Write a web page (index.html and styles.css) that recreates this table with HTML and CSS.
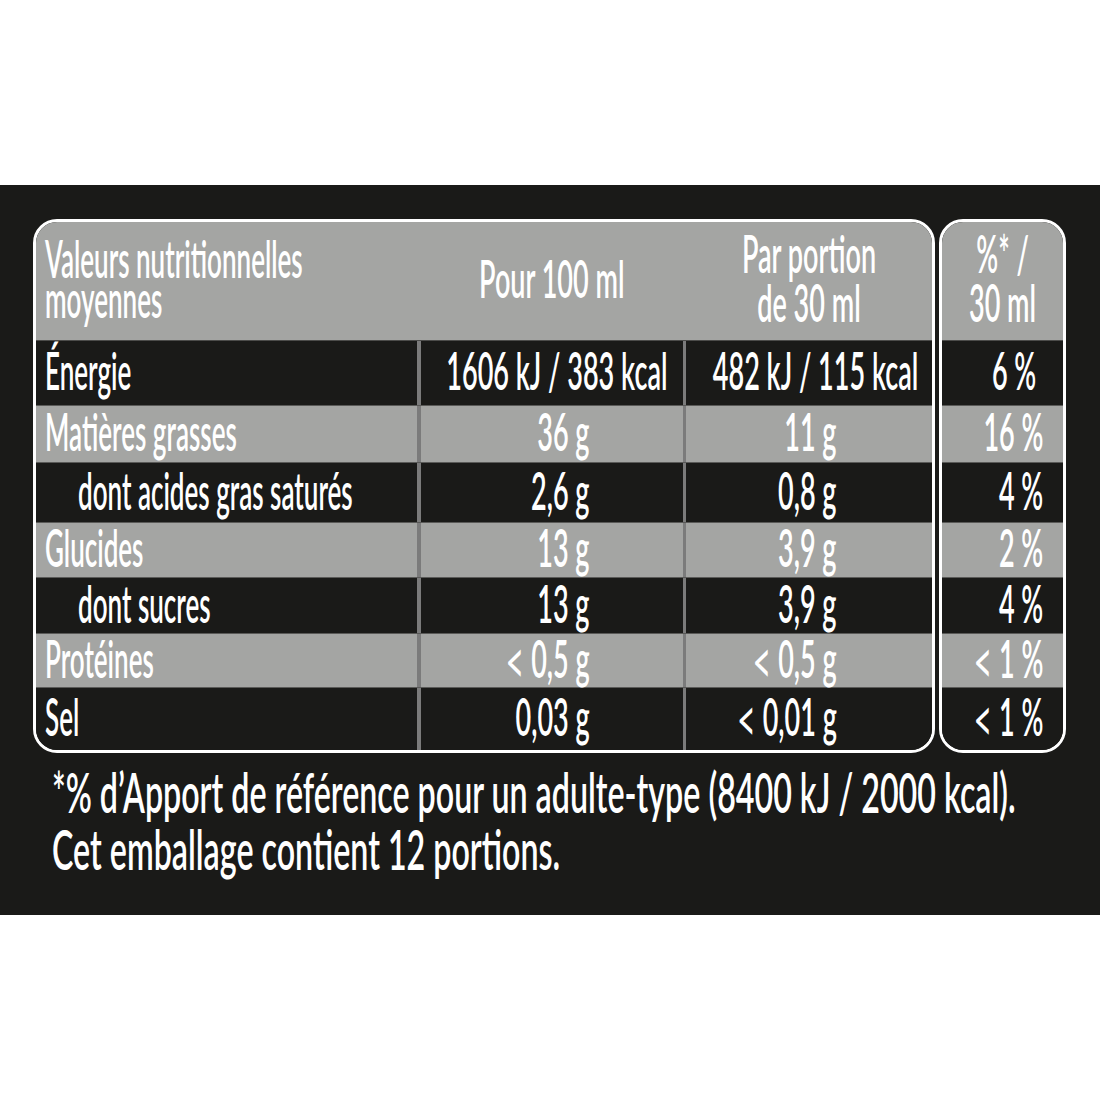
FILE: index.html
```html
<!DOCTYPE html>
<html lang="fr">
<head>
<meta charset="utf-8">
<title>Valeurs nutritionnelles</title>
<link rel="stylesheet" href="styles.css">
</head>
<body>
<div class="band">
  <div class="tables">
    <div class="box main">
      <div class="row head">
        <div class="c c1 hl"><span class="t lbl">Valeurs nutritionnelles<br>moyennes</span></div>
        <div class="c c2 hc"><span class="t">Pour 100 ml</span></div>
        <div class="c c3 hc"><span class="t tall">Par portion<br>de 30 ml</span></div>
      </div>
      <div class="row dark r-en">
        <div class="c c1"><span class="t lbl">Énergie</span></div>
        <div class="c c2 num wide"><span class="t">1606 kJ / 383 kcal</span></div>
        <div class="c c3 num wide"><span class="t">482 kJ / 115 kcal</span></div>
      </div>
      <div class="row light r-mg">
        <div class="c c1"><span class="t lbl">Matières grasses</span></div>
        <div class="c c2 num"><span class="t">36 g</span></div>
        <div class="c c3 num"><span class="t">11 g</span></div>
      </div>
      <div class="row dark r-ag">
        <div class="c c1 sub"><span class="t lbl">dont acides gras saturés</span></div>
        <div class="c c2 num"><span class="t">2,6 g</span></div>
        <div class="c c3 num"><span class="t">0,8 g</span></div>
      </div>
      <div class="row light r-gl">
        <div class="c c1"><span class="t lbl">Glucides</span></div>
        <div class="c c2 num"><span class="t">13 g</span></div>
        <div class="c c3 num"><span class="t">3,9 g</span></div>
      </div>
      <div class="row dark r-su">
        <div class="c c1 sub"><span class="t lbl">dont sucres</span></div>
        <div class="c c2 num"><span class="t">13 g</span></div>
        <div class="c c3 num"><span class="t">3,9 g</span></div>
      </div>
      <div class="row light r-pr">
        <div class="c c1"><span class="t lbl">Protéines</span></div>
        <div class="c c2 num"><span class="t"><span class="lt">&lt;</span> 0,5 g</span></div>
        <div class="c c3 num"><span class="t"><span class="lt">&lt;</span> 0,5 g</span></div>
      </div>
      <div class="row dark r-se">
        <div class="c c1"><span class="t lbl">Sel</span></div>
        <div class="c c2 num"><span class="t">0,03 g</span></div>
        <div class="c c3 num"><span class="t"><span class="lt">&lt;</span> 0,01 g</span></div>
      </div>
    </div>
    <div class="box side">
      <div class="row head">
        <div class="c cs hc"><span class="t tall">%* /<br>30 ml</span></div>
      </div>
      <div class="row dark r-en"><div class="c cs num wide"><span class="t">6 %</span></div></div>
      <div class="row light r-mg"><div class="c cs num"><span class="t">16 %</span></div></div>
      <div class="row dark r-ag"><div class="c cs num"><span class="t">4 %</span></div></div>
      <div class="row light r-gl"><div class="c cs num"><span class="t">2 %</span></div></div>
      <div class="row dark r-su"><div class="c cs num"><span class="t">4 %</span></div></div>
      <div class="row light r-pr"><div class="c cs num"><span class="t"><span class="lt">&lt;</span> 1 %</span></div></div>
      <div class="row dark r-se"><div class="c cs num"><span class="t"><span class="lt">&lt;</span> 1 %</span></div></div>
    </div>
  </div>
  <p class="note"><span class="t">*% d’Apport de référence pour un adulte-type (8400 kJ / 2000 kcal).<br>Cet emballage contient 12 portions.</span></p>
</div>
</body>
</html>
```

FILE: styles.css
```css
html, body {
  margin: 0;
  padding: 0;
  background: #ffffff;
  overflow: hidden;
}

body {
  font-family: Lato, Roboto, "Liberation Sans", sans-serif;
  color: #ffffff;
}

.band {
  margin-top: 185px;
  height: 730px;
  box-sizing: border-box;
  padding: 34px 0 0 33px;
  background: #1a1a18;
  overflow: hidden;
}

.tables {
  display: flex;
  gap: 4px;
  align-items: flex-start;
}

.box {
  border: 3px solid #ffffff;
  border-radius: 24px;
  overflow: hidden;
}

.main { width: 896px; }
.side { width: 121px; }

.row {
  display: flex;
  box-sizing: border-box;
}

.head { height: 118px; background: #a4a5a3; }
.dark { background: #1a1a18; }
.light { background: #a4a5a3; }

.r-en { height: 65px; border-top: 1px solid #4c4c4a; }
.r-mg { height: 57px; border-top: 1px solid #5a5a58; }
.r-ag { height: 60px; border-top: 1px solid #5a5a58; }
.r-gl { height: 55px; border-top: 1px solid #5a5a58; }
.r-su { height: 56px; border-top: 1px solid #5a5a58; }
.r-pr { height: 54px; border-top: 1px solid #5a5a58; }
.r-se { height: 63px; border-top: 1px solid #5a5a58; }

.c {
  display: flex;
  align-items: center;
  box-sizing: border-box;
  white-space: nowrap;
  height: 100%;
  padding-bottom: 6px;
}

.c1 { width: 381px; padding-left: 9px; justify-content: flex-start; }
.c2 { width: 266px; border-left: 4px solid #7b7b7b; }
.c3 { width: 249px; border-left: 3px solid #7b7b7b; }
.cs { width: 121px; }

.head .c2, .head .c3 { border-left-color: transparent; }

.sub { padding-left: 42px; }

.t {
  display: inline-block;
  font-size: 52px;
  font-weight: 600;
  line-height: 52px;
  transform: scaleX(0.52);
  transform-origin: left center;
}

.t.lbl { transform: scaleX(0.5); }

.lt {
  font-size: 1.2em;
  font-weight: 400;
  line-height: 0;
  vertical-align: -0.1em;
}

.hl .t { line-height: 40px; }

.hc { justify-content: center; }
.hc .t { text-align: center; transform-origin: center center; }
.t.tall { line-height: 49px; }

.num { justify-content: flex-end; }
.num .t { transform-origin: right center; }

.c2.num { padding-right: 93px; }
.c3.num { padding-right: 95px; }
.cs.num { padding-right: 20px; }
.c2.wide { padding-right: 15px; }
.c3.wide { padding-right: 14px; }
.cs.wide { padding-right: 27px; }

.note {
  margin: 10px 0 0 19px;
  white-space: nowrap;
}

.note .t {
  font-size: 56px;
  line-height: 57px;
  transform: scaleX(0.575);
}
```
